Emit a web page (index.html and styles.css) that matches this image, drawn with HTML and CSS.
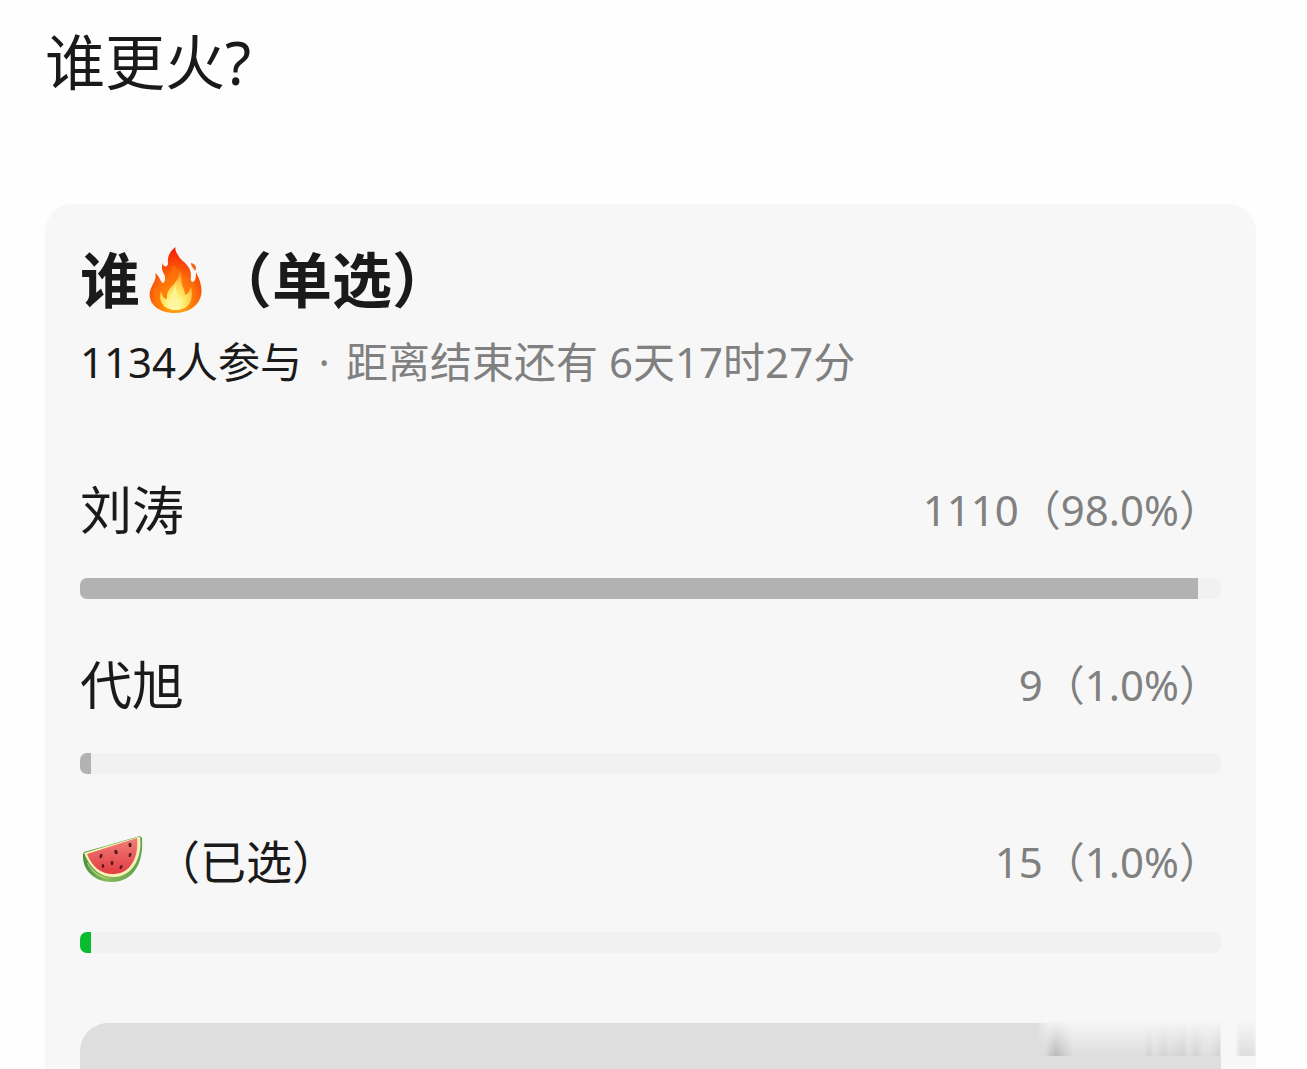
FILE: index.html
```html
<!DOCTYPE html>
<html lang="zh-CN">
<head>
<meta charset="utf-8">
<meta name="viewport" content="width=device-width, initial-scale=1">
<title>谁更火?</title>
<link rel="stylesheet" href="styles.css">
</head>
<body>
<main class="post">
  <p class="post-text">谁更火?</p>
  <section class="poll">
    <h1 class="poll-title"><span>谁</span><svg class="fire" viewBox="0 0 54 66" role="img" aria-label="火">
      <defs>
        <radialGradient id="flame" cx=".5" cy=".85" r=".85">
          <stop offset="0" stop-color="#ffb51c"/><stop offset=".3" stop-color="#ff8a0a"/><stop offset=".6" stop-color="#fa5a08"/><stop offset="1" stop-color="#f81808"/>
        </radialGradient>
        <radialGradient id="core" cx=".45" cy=".88" r=".8">
          <stop offset="0" stop-color="#fffdd0"/><stop offset=".35" stop-color="#ffee70"/><stop offset=".75" stop-color="#ffc94a"/><stop offset="1" stop-color="#fa9535"/>
        </radialGradient>
      </defs>
      <path fill="url(#flame)" d="M26.500 0C21 4 18 10 19 16c0 3-2 4-4 3-1-1-1-2-1-3-2 4-1 7 1 11 2 4 1 8-1 9-3-1-3-7-8-10 2 5-1 9-3 13-7 13 2 27 23 27 19 0 29-13 26-27-1-7-4-11-5-14 0 7-1 10-4 10-3-2 1-8-3-14-3-6-9-8-11-13-2-3-3-5-2.500-8z"/>
      <path fill="#f8601a" d="M42 16c5 1 6 5 4 8-1-3-4-4-4-8z"/>
      <path fill="#ff7608" d="M24 17c5 7 13 10 13 19 0 5 4 4 8-2 2 12-2 25-18 28C11 61 2 52 5 39c2 5 6 5 8 0 2-6 10-9 11-22z" opacity=".6"/>
      <path fill="url(#core)" d="M31 24c2 7 1 10 2 13 1 5 3 6 3 11 3-1 4-3 6-8 3 13-2 23-15 23C14 63 9 54 12 44c1 5 3 8 6 8-1-13 11-13 13-28z"/>
      <path fill="#fff59b" d="M27 36c-1 8 3 12 2 17 2-1 3-2 4-4 1 8-3 14-8 14-6-1-8-6-6-12 1 3 3 3 3 0 0-5 4-8 5-15z" opacity=".8"/>
    </svg><span>（单选）</span></h1>
    <p class="poll-meta"><span class="joined">1134人参与</span><span class="dot">·</span><span>距离结束还有 6天17时27分</span></p>
    <ul class="options">
      <li class="option">
        <div class="option-row"><span class="name">刘涛</span><span class="votes">1110（98.0%）</span></div>
        <div class="track"><div class="fill" style="width:98%"></div></div>
      </li>
      <li class="option">
        <div class="option-row"><span class="name">代旭</span><span class="votes">9（1.0%）</span></div>
        <div class="track"><div class="fill" style="width:1%"></div></div>
      </li>
      <li class="option chosen">
        <div class="option-row"><span class="name"><svg class="melon" viewBox="0 0 62 46" role="img" aria-label="西瓜">
          <defs>
            <linearGradient id="rind" x1="0" y1="0" x2="1" y2="0"><stop offset="0" stop-color="#4c8f3a"/><stop offset=".4" stop-color="#86b858"/><stop offset="1" stop-color="#5da04c"/></linearGradient>
            <linearGradient id="flesh" x1="0" y1="0" x2="0" y2="1"><stop offset="0" stop-color="#f07f78"/><stop offset="1" stop-color="#e23b42"/></linearGradient>
          </defs>
          <path fill="url(#rind)" d="M1 18C0 34 12 46 30 46 49 46 62 30 60 2L58 0 2 16z"/>
          <path fill="#b4d283" d="M5 27c5 11 15 17 26 16-12-1-20-7-25-16z"/>
          <path fill="#f6f1b4" d="M2 17C9 34 19 41 32 41 49 41 61 23 58 1L56 1z"/>
          <path fill="url(#flesh)" d="M5 18 55 2c2 20-7 36-24 36C19 38 10 31 5 18z"/>
          <g fill="#54191b">
            <ellipse cx="19" cy="20" rx="1.400" ry="2.400" transform="rotate(15 19 20)"/>
            <ellipse cx="34" cy="16" rx="1.600" ry="2.400" transform="rotate(-20 34 16)"/>
            <ellipse cx="48" cy="9" rx="1.500" ry="2.200"/>
            <ellipse cx="48" cy="19" rx="1.300" ry="2.200" transform="rotate(20 48 19)"/>
            <ellipse cx="30" cy="27" rx="1.400" ry="2.200"/>
            <ellipse cx="21" cy="30" rx="1.300" ry="2"/>
            <ellipse cx="39" cy="31" rx="1.300" ry="2.200" transform="rotate(25 39 31)"/>
          </g>
        </svg><span class="picked">（已选）</span></span><span class="votes">15（1.0%）</span></div>
        <div class="track"><div class="fill" style="width:1%"></div></div>
      </li>
    </ul>
    <button class="action" type="button" aria-label="投票"></button>
    <div class="haze" aria-hidden="true"></div>
  </section>
</main>
</body>
</html>
```
FILE: styles.css
```css
* { box-sizing: border-box; }

body {
  margin: 0;
  background: #fefefe;
  color: #1a1a1a;
  font-family: "Noto Sans", "Noto Sans CJK SC", sans-serif;
}

.post {
  display: flex;
  flex-direction: column;
  gap: 80px;
  min-height: 100vh;
  padding: 0 51px 0 45px;
}

.post-text {
  margin: 0;
  font-size: 60px;
  line-height: 124px;
}

.poll {
  position: relative;
  display: flex;
  flex-direction: column;
  flex: 1;
  padding: 36px 35px 0;
  border-radius: 28px 28px 0 0;
  background: #f7f7f7;
}

.poll-title {
  display: flex;
  align-items: center;
  margin: 0;
  font-size: 60px;
  font-weight: 700;
  line-height: 80px;
}

.fire {
  width: 54px;
  height: 66px;
  margin: 0 9px;
}

.poll-meta {
  display: flex;
  margin: 12px 0 0;
  font-size: 42px;
  line-height: 60px;
  color: #808080;
}

.joined { color: #1a1a1a; }

.dot {
  width: 44px;
  text-align: center;
}

.options {
  display: flex;
  flex-direction: column;
  gap: 47px;
  margin: 79px 0 0;
  padding: 0;
  list-style: none;
}

.option-row {
  display: flex;
  align-items: center;
  justify-content: space-between;
  height: 72px;
  margin-bottom: 35px;
}

.chosen .option-row { height: 76px; }

.name {
  display: flex;
  align-items: center;
  font-size: 52px;
}

.picked { font-size: 46px; }

.melon {
  width: 62px;
  height: 46px;
  margin: 0 10px 0 2px;
}

.votes {
  font-size: 42px;
  color: #808080;
}

.track {
  height: 21px;
  overflow: hidden;
  border-radius: 7px;
  background: #f1f1f1;
}

.fill {
  height: 100%;
  background: #b2b2b2;
}

.chosen .fill { background: #09bb2f; }

.action {
  flex: 1;
  min-height: 46px;
  margin-top: 70px;
  padding: 0;
  border: 0;
  border-radius: 28px 0 0 0;
  background: #dedede;
}

/* Soft smudge over the lower right corner of the card */
.haze {
  position: absolute;
  right: 0;
  bottom: 13px;
  width: 220px;
  height: 40px;
  background:
    linear-gradient(#f7f7f7 10%, #f7f7f700),
    linear-gradient(90deg, #dedede, #d4d4d4 10px, #b8b8b8 20px, #d0d0d0 30px, #dedede 38px, #dedede 108px, #d2d2d2 113px, #dedede 118px, #d3d3d3 128px, #dadada 134px, #d0d0d0 148px, #dedede 152px, #d2d2d2 160px, #dedede 168px, #dedede 174px, #d0d0d0 184px, #f7f7f7 185px, #f7f7f7 199px, #dedede 204px, #dedede 217px, #eeeeee);
  mask-image: linear-gradient(90deg, transparent, #000 14px);
}
```
